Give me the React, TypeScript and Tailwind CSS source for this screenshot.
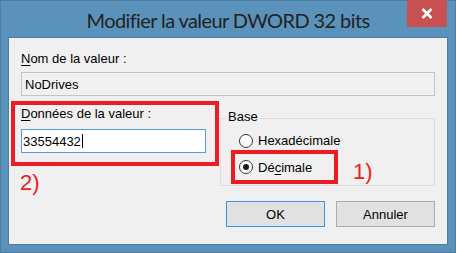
import React from 'react';

const ui = { fontFamily: '"Liberation Sans", Arial, sans-serif' };

function Radio({ checked }: { checked?: boolean }) {
  return (
    <span className="flex h-[14px] w-[14px] shrink-0 items-center justify-center rounded-full border border-[#333333] bg-white">
      {checked && <span className="h-[6px] w-[6px] rounded-full bg-[#1a1a1a]" />}
    </span>
  );
}

export default function App() {
  return (
    <div
      className="relative flex h-[253px] w-[456px] flex-col border border-[#4b7ea3] bg-[#5b92bb] px-[7px] text-[13px] leading-[15px] text-black"
      style={ui}
    >
      {/* Title bar */}
      <div className="flex h-[36px] shrink-0 items-center justify-center pt-[2px]">
        <span
          className="text-[20px] leading-[24px] tracking-[-0.6px] text-[#222222]"
          style={{ fontFamily: 'Lato, "Open Sans", sans-serif' }}
        >
          Modifier la valeur DWORD 32 bits
        </span>
      </div>
      <button className="absolute right-[8px] top-[-1px] flex h-[27px] w-[40px] items-center justify-center bg-[#c75050]">
        <svg width="12" height="11" viewBox="0 0 12 11">
          <path d="M1.5 1 L10.5 10 M10.5 1 L1.5 10" stroke="#ffffff" strokeWidth="2.6" />
        </svg>
      </button>

      {/* Dialog body */}
      <div className="flex h-[208px] flex-col border border-[#4a7ea6] bg-[#f0f0f0] px-3">
        <div className="pt-[13px]">
          <span className="underline decoration-1 underline-offset-2">N</span>om de la valeur :
        </div>
        <div className="mt-[6px] flex h-[24px] items-center border border-[#c4c4c4] bg-[#f0f0f0] pl-[3px]">
          NoDrives
        </div>

        <div className="mt-[5px] flex items-start">
          <div className="ml-[-10px] flex flex-col">
            <div className="border-4 border-[#ed1c24] pb-[9px] pl-[6px] pr-[9px] pt-[1px]">
              <div>
                <span className="underline decoration-1 underline-offset-2">D</span>onnées de la valeur :
              </div>
              <div className="mt-[8px] flex h-[24px] w-[185px] items-center border border-[#569de5] bg-white pl-[1px]">
                33554432
                <span className="ml-[1px] h-[14px] w-px bg-black" />
              </div>
            </div>
            <div className="ml-[9px] mt-[6px] text-[22px] leading-[22px] text-[#ed1c24]">2)</div>
          </div>

          <fieldset className="ml-px mt-[8px] w-[215px] border border-[#dcdcdc] pb-px">
            <legend className="ml-[5px] px-[2px] pb-[3px]">Base</legend>
            <div className="mt-[6px] flex items-center pl-[18px]">
              <Radio />
              <span className="ml-[5px]">Hexadécimale</span>
            </div>
            <div className="mt-[2px] flex items-start">
              <div className="ml-[10px] flex h-[34px] w-[107px] items-center border-4 border-[#ed1c24] pl-[4px]">
                <Radio checked />
                <span className="ml-[5px]">
                  Dé<span className="underline decoration-1 underline-offset-2">c</span>imale
                </span>
              </div>
              <span className="ml-[15px] mt-[11px] text-[22px] leading-[22px] text-[#ed1c24]">1)</span>
            </div>
          </fieldset>
        </div>

        <div className="mt-[7px] flex justify-end gap-[11px]">
          <button className="flex h-[26px] w-[99px] items-center justify-center border border-[#3c94e6] bg-[#e1e1e1]">
            OK
          </button>
          <button className="flex h-[26px] w-[99px] items-center justify-center border border-[#adadad] bg-[#e1e1e1]">
            Annuler
          </button>
        </div>
      </div>
    </div>
  );
}
